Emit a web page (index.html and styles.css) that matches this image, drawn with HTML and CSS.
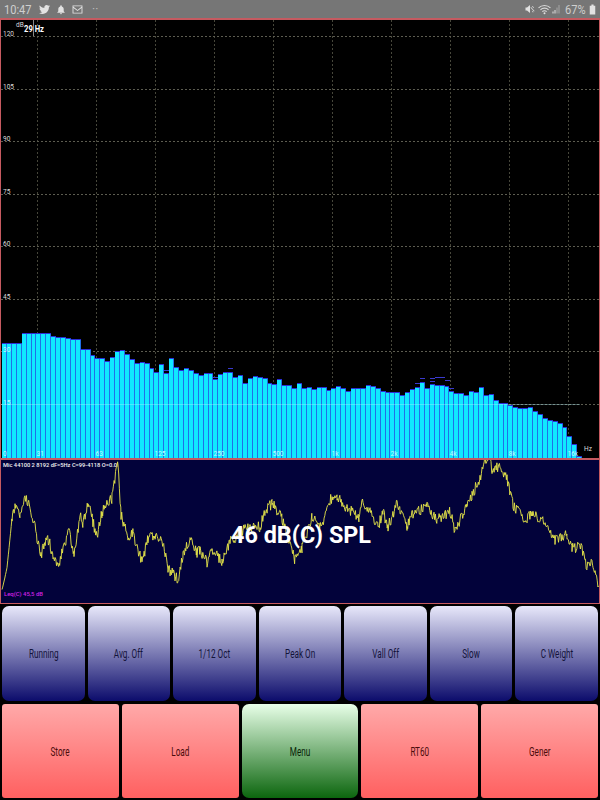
FILE: index.html
```html
<!DOCTYPE html>
<html lang="en">
<head>
    <meta charset="UTF-8">
    <meta name="viewport" content="width=device-width, initial-scale=1.0">
    <title>Spectrum Analyzer</title>
    <link rel="stylesheet" href="styles.css">
</head>
<body>

<div class="status-bar">
    <div class="status-left">
        <span class="clock">10:47</span>
        <svg class="icon icon-twitter" viewBox="0 0 24 24"><path d="M23.953 4.57a10 10 0 01-2.825.775 4.958 4.958 0 002.163-2.723c-.951.555-2.005.959-3.127 1.184a4.92 4.92 0 00-8.384 4.482C7.69 8.095 4.067 6.13 1.64 3.162a4.822 4.822 0 00-.666 2.475c0 1.71.87 3.213 2.188 4.096a4.904 4.904 0 01-2.228-.616v.06a4.923 4.923 0 003.946 4.827 4.996 4.996 0 01-2.212.085 4.936 4.936 0 004.604 3.417 9.867 9.867 0 01-6.102 2.105c-.39 0-.779-.023-1.17-.067a13.995 13.995 0 007.557 2.209c9.053 0 13.998-7.496 13.998-13.985 0-.21 0-.42-.015-.63A9.935 9.935 0 0024 4.59z"/></svg>
        <svg class="icon icon-bell" viewBox="0 0 24 24"><path d="M12 2a2 2 0 00-2 2v.6C7 5.500 5.500 8 5.500 11v5L3 19v1h18v-1l-2.500-3v-5c0-3-1.500-5.500-4.500-6.400V4a2 2 0 00-2-2zM9.500 21a2.500 2.500 0 005 0z"/></svg>
        <svg class="icon icon-mail" viewBox="0 0 24 20"><path d="M1 1h22v18H1zM3 4l9 7 9-7v-1H3zM3 6.500V17h18V6.500l-9 7z" fill-rule="evenodd"/></svg>
        <span class="dots">··</span>
    </div>
    <div class="status-right">
        <svg class="icon icon-mute" viewBox="0 0 20 20"><path d="M1 7h3l6-5v16l-6-5H1zM12 6l7 8-1 1-7-8zM15 4l3 3-1 1-3-3zM14 15l2 2 1-1-2-2z"/></svg>
        <svg class="icon icon-wifi" viewBox="0 0 24 20"><path d="M1 7c6-6 16-6 22 0M4.500 10.500c4-4 11-4 15 0M8 14c2-2 6-2 8 0" fill="none" stroke="#d8d8d8" stroke-width="2"/><circle cx="12" cy="17" r="1.800"/></svg>
        <svg class="icon icon-signal" viewBox="0 0 16 20"><path d="M1 15h2v4H1zM5 12h2v7H5z"/><path class="signal-off" d="M9 7h2v12H9zM13 2h2v17h-2z"/></svg>
        <span class="battery-pct">67%</span>
        <svg class="icon icon-battery" viewBox="0 0 12 20"><path d="M4 1h4v2h3v16H1V3h3z"/></svg>
    </div>
</div>

<div class="chart">
    <svg id="spectrum" class="spectrum" viewBox="1 20 598 438"></svg>
</div>

<div class="trace-panel">
    <svg id="trace" class="trace" viewBox="1 460 598 143"></svg>
</div>

<div class="buttons">
    <div class="btn-row row-seven">
        <div class="btn btn-blue"><span>Running</span></div>
        <div class="btn btn-blue"><span>Avg. Off</span></div>
        <div class="btn btn-blue"><span>1/12 Oct</span></div>
        <div class="btn btn-blue"><span>Peak On</span></div>
        <div class="btn btn-blue"><span>Vall Off</span></div>
        <div class="btn btn-blue"><span>Slow</span></div>
        <div class="btn btn-blue"><span>C Weight</span></div>
    </div>
    <div class="btn-row row-five">
        <div class="btn btn-red"><span>Store</span></div>
        <div class="btn btn-red"><span>Load</span></div>
        <div class="btn btn-green"><span>Menu</span></div>
        <div class="btn btn-red"><span>RT60</span></div>
        <div class="btn btn-red"><span>Gener</span></div>
    </div>
</div>

<script src="script.js"></script>
</body>
</html>
```

FILE: styles.css
```css
body {
    font-family: 'Roboto', 'Liberation Sans', sans-serif;
    background-color: #000;
    margin: 0;
    padding: 0;
    width: 600px;
    height: 800px;
    overflow: hidden;
}
.status-bar {
    display: flex;
    justify-content: space-between;
    align-items: center;
    height: 18px;
    background-color: #767676;
    color: #cfcfcf;
    padding: 0 4px 0 4px;
}
.status-left, .status-right {
    display: flex;
    align-items: center;
}
.clock {
    font-size: 13.5px;
    width: 28px;
    margin-right: 7px;
    transform: scaleX(0.82);
    transform-origin: left center;
}
.icon {
    fill: #e2e2e2;
    display: block;
}
.icon-twitter {
    width: 11px;
    height: 11px;
    margin-right: 6px;
}
.icon-bell {
    width: 10px;
    height: 11px;
    margin-right: 6px;
}
.icon-mail {
    width: 11px;
    height: 9px;
    margin-right: 9px;
}
.dots {
    font-size: 12px;
    color: #bbb;
}
.icon-mute {
    width: 10px;
    height: 10px;
    margin-right: 3px;
}
.icon-wifi {
    width: 13px;
    height: 11px;
    margin-right: 1px;
}
.icon-signal {
    width: 8px;
    height: 10px;
    margin-right: 5px;
}
.signal-off {
    opacity: 0.45;
}
.battery-pct {
    font-size: 13.5px;
    width: 21px;
    margin-right: 3px;
    transform: scaleX(0.82);
    transform-origin: left center;
    white-space: nowrap;
}
.icon-battery {
    width: 7px;
    height: 11px;
}
.chart {
    height: 438px;
    background-color: #000;
    border: solid #c65a60;
    border-width: 2px 1px 1px 1px;
}
.spectrum, .trace {
    display: block;
    width: 598px;
}
.spectrum {
    height: 438px;
}
.trace {
    height: 143px;
}
.grid-line {
    stroke: #5c5c50;
    stroke-width: 1;
    stroke-dasharray: 2 2;
    shape-rendering: crispEdges;
}
.grid-dim {
    stroke: #46463a;
}
.grid-over {
    stroke: #b8f6ff;
    stroke-width: 1;
    opacity: 0.35;
    shape-rendering: crispEdges;
}
.bar-edge {
    fill: #2070e8;
    shape-rendering: crispEdges;
}
.bar-top {
    fill: #2a30d8;
    shape-rendering: crispEdges;
}
.bar {
    fill: #10e8ff;
    shape-rendering: crispEdges;
}
.peak {
    stroke: #3a3ad0;
    stroke-width: 1;
    shape-rendering: crispEdges;
}
.axis-text {
    font-size: 6.5px;
    fill: #dcdcdc;
}
.axis-over {
    fill: #c4f8ff;
}
.cursor-line {
    stroke: #8a8a8a;
    stroke-width: 1;
}
.cursor-text {
    font-size: 9.5px;
    font-weight: bold;
    fill: #fff;
}
.trace-panel {
    height: 143px;
    background-color: #02023a;
    border: solid #c65a60;
    border-width: 1px 1px 1px 1px;
}
.trace-line {
    fill: none;
    stroke: #e6e64a;
    stroke-width: 0.9;
    stroke-linejoin: round;
}
.mic-text {
    font-size: 6px;
    font-weight: 500;
    fill: #f4f4f4;
}
.leq-text {
    font-size: 6px;
    font-weight: 500;
    fill: #d020e4;
}
.spl-text {
    font-size: 24px;
    font-weight: bold;
    fill: #fff;
}
.buttons {
    display: flex;
    flex-direction: column;
    gap: 3px;
    padding: 2px 2px 2px 2px;
}
.btn-row {
    display: grid;
    gap: 3px;
}
.row-seven {
    grid-template-columns: repeat(7, 1fr);
    height: 95px;
}
.row-five {
    grid-template-columns: repeat(5, 1fr);
    height: 94px;
}
.btn {
    display: flex;
    align-items: center;
    justify-content: center;
    font-size: 12px;
}
.btn span {
    display: block;
    transform: scaleX(0.68);
    white-space: nowrap;
    padding-top: 1px;
}
.btn-blue {
    background: linear-gradient(#e8e8fa, #0c0c6c);
    border-radius: 7px;
    color: #14143a;
}
.btn-red {
    background: linear-gradient(#ffa9a9, #ff6060);
    border-radius: 3px;
    color: #4a0c0c;
}
.btn-green {
    background: linear-gradient(#e8ffe8, #0c660e);
    border-radius: 7px;
    color: #082408;
}
```

FILE: script.js
```js
const NS = "http://www.w3.org/2000/svg";

// tops of the 1/12 octave bars, page y, left to right
const barTops = [
    343, 343, 343, 343, 333, 333, 333, 332.5, 332.5, 332.5,
    336, 337, 337, 337.5, 339, 339, 349, 349, 355, 358,
    358, 361, 357, 351, 349.5, 354, 359, 363, 362, 363,
    368, 372, 364, 373, 358, 367, 370, 368, 370, 373,
    375, 373, 372.5, 379, 374, 372, 371.5, 377, 375, 383,
    378, 375.5, 377, 378, 383, 384, 379, 385, 385, 388,
    383, 388, 387, 389, 387, 387, 390, 388, 386, 388,
    391, 388, 388, 388, 385, 386, 388, 391, 392, 392,
    392, 395, 392, 389, 387, 382, 388, 384, 385, 385,
    386, 391, 393, 393, 395, 391, 392, 387, 395, 394,
    400, 403, 403, 405, 407, 408, 408, 407, 411, 414,
    418, 420, 421, 423, 427, 436, 444, 456
];

// held peaks above the bars: [bar index, y]
const peaks = [
    [33, 370], [43, 377], [46, 368], [84, 383], [85, 378], [87, 381],
    [87, 378], [88, 377.5], [89, 377], [90, 380], [91, 388]
];

// rough shape of the level trace, noise gets added on top
const traceShape = [
    [2, 590], [7, 568], [12, 518], [15, 505], [20, 515], [25, 497], [28, 503], [33, 518],
    [37, 537], [41, 555], [47, 535], [53, 555], [59, 568], [63, 548], [69, 532], [74, 555],
    [80, 515], [83, 523], [88, 503], [97, 538], [102, 512], [112, 498], [118, 460], [121, 515],
    [128, 537], [133, 533], [142, 563], [148, 538], [155, 535], [163, 543], [168, 568], [178, 580],
    [183, 555], [190, 540], [197, 552], [200, 550], [207, 563], [212, 548], [222, 562], [230, 542],
    [243, 530], [260, 527], [265, 512], [272, 503], [282, 518], [295, 560], [302, 548], [312, 518],
    [322, 527], [330, 500], [337, 495], [347, 508], [359, 517], [363, 500], [378, 527], [383, 512],
    [388, 527], [397, 503], [400, 510], [407, 527], [413, 513], [427, 507], [437, 520], [450, 512],
    [455, 530], [467, 507], [472, 495], [480, 478], [485, 458], [491, 458], [492, 472], [498, 467],
    [507, 478], [513, 505], [525, 520], [533, 512], [543, 522], [555, 540], [567, 535], [572, 547],
    [582, 548], [587, 567], [593, 562], [599, 587]
];

function el(parent, name, attrs, text) {
    const node = document.createElementNS(NS, name);
    for (const key in attrs) {
        node.setAttribute(key, attrs[key]);
    }
    if (text) {
        node.textContent = text;
    }
    parent.appendChild(node);
    return node;
}

function drawSpectrum() {
    const svg = document.getElementById("spectrum");
    const gridX = [37.5, 96.5, 155.5, 214.5, 273.5, 332.5, 391.5, 450.5, 509.5, 568.5];
    const gridY = [36.5, 89, 141.5, 194, 246.5, 299, 351.5, 404];

    gridX.forEach(x => el(svg, "line", { class: "grid-line grid-dim", x1: x, x2: x, y1: 20, y2: 458 }));
    gridY.forEach(y => el(svg, "line", { class: "grid-line", x1: 1, x2: 599, y1: y, y2: y }));

    const pitch = 59 / 12;
    barTops.forEach((top, i) => {
        const x = Math.round(2 + i * pitch);
        const next = Math.round(2 + (i + 1) * pitch);
        const w = next - x;
        el(svg, "rect", { class: "bar-edge", x: x, y: top, width: w, height: 458 - top });
        el(svg, "rect", { class: "bar", x: x, y: top + 1, width: w - 1, height: 457 - top });
        el(svg, "rect", { class: "bar-top", x: x, y: top, width: w, height: 1 });
    });
    el(svg, "line", { class: "grid-over", x1: 1, x2: 580, y1: 404.5, y2: 404.5 });

    peaks.forEach(([i, y]) => {
        const x = Math.round(2 + i * pitch);
        el(svg, "line", { class: "peak", x1: x, x2: x + 5, y1: y, y2: y });
    });

    const dbLabels = ["120", "105", "90", "75", "60", "45"];
    dbLabels.forEach((label, i) => {
        el(svg, "text", { class: "axis-text", x: 3, y: 36 + i * 52.5 }, label);
    });
    el(svg, "text", { class: "axis-text axis-over", x: 3, y: 352 }, "30");
    el(svg, "text", { class: "axis-text axis-over", x: 3, y: 405 }, "15");

    const hzLabels = ["31", "63", "125", "250", "500", "1k", "2k", "4k", "8k", "16k"];
    el(svg, "text", { class: "axis-text axis-over", x: 3, y: 456 }, "0");
    hzLabels.forEach((label, i) => {
        el(svg, "text", { class: "axis-text axis-over", x: gridX[i] - 1, y: 456 }, label);
    });
    el(svg, "text", { class: "axis-text", x: 584, y: 451 }, "Hz");

    el(svg, "line", { class: "cursor-line", x1: 33.5, x2: 33.5, y1: 20, y2: 36 });
    el(svg, "text", { class: "axis-text", x: 16, y: 27 }, "dB");
    el(svg, "text", { class: "cursor-text", x: 24, y: 31.5, textLength: 20, lengthAdjust: "spacingAndGlyphs" }, "29 Hz");
}

function drawTrace() {
    const svg = document.getElementById("trace");
    let seed = 4711;
    const noise = () => {
        seed = (seed * 16807) % 2147483647;
        return seed / 2147483647 - 0.5;
    };

    const points = [];
    for (let s = 0; s < traceShape.length - 1; s++) {
        const [x0, y0] = traceShape[s];
        const [x1, y1] = traceShape[s + 1];
        for (let x = x0; x < x1; x += 0.7) {
            const y = y0 + (y1 - y0) * (x - x0) / (x1 - x0);
            const amount = x < 12 ? 1 : 11;
            points.push(x.toFixed(1) + "," + (y + noise() * amount).toFixed(1));
        }
    }
    el(svg, "polyline", { class: "trace-line", points: points.join(" ") });

    el(svg, "text", { class: "mic-text", x: 3, y: 467, textLength: 114, lengthAdjust: "spacingAndGlyphs" }, "Mic 44100 2 8192 dF=5Hz C=99-4118 O=0.0");
    el(svg, "text", { class: "leq-text", x: 4, y: 596, textLength: 39, lengthAdjust: "spacingAndGlyphs" }, "Leq(C) 45,5 dB");
    el(svg, "text", { class: "spl-text", x: 231, y: 543, textLength: 140, lengthAdjust: "spacingAndGlyphs" }, "46 dB(C) SPL");
}

drawSpectrum();
drawTrace();
```
